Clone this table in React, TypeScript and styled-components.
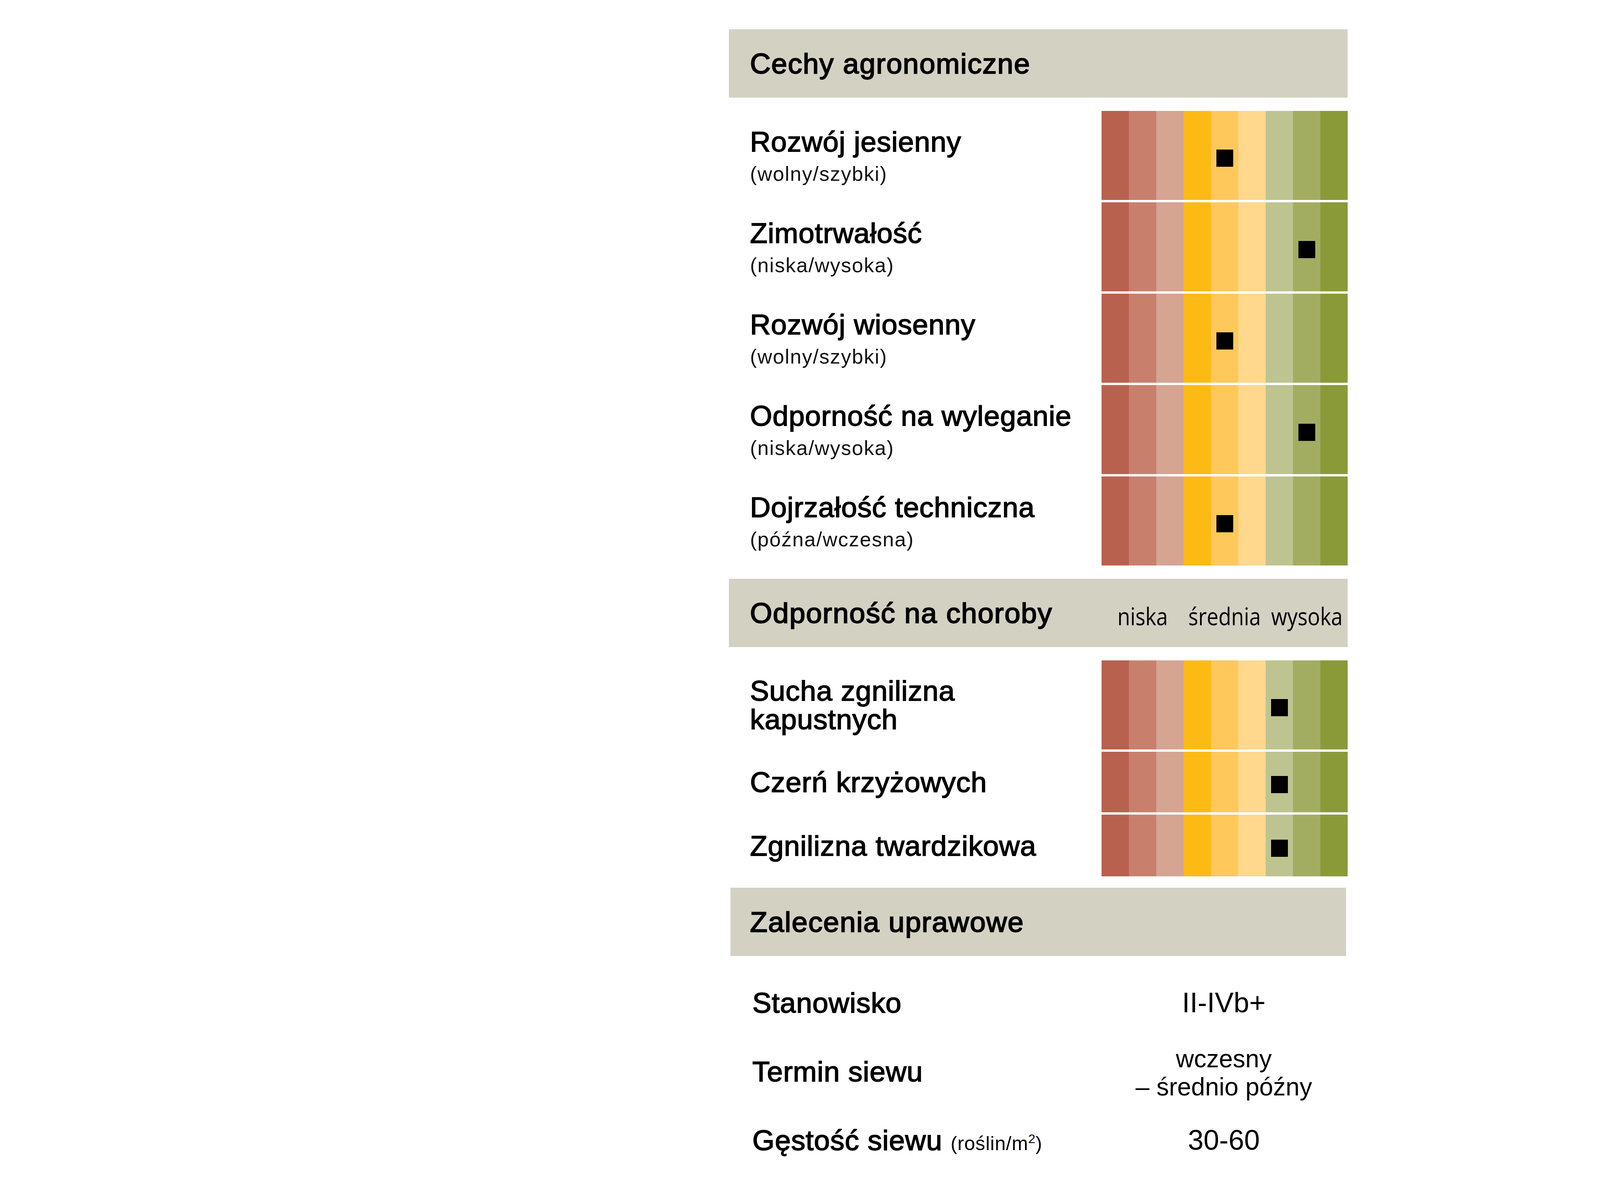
import styled, { createGlobalStyle } from "styled-components"

const GlobalStyle = createGlobalStyle`
    html, body {
        margin: 0;
        padding: 0;
        background: #ffffff;
    }
`

const SCALE = [
    "#B8614F",
    "#C8806C",
    "#D5A492",
    "#FCBA15",
    "#FEC85B",
    "#FFD88D",
    "#BEC490",
    "#A3AD62",
    "#8B9A39",
]

const Sheet = styled.div`
    display: flex;
    flex-direction: column;
    width: 1584px;
    margin-left: 1866px;
    padding-top: 75px;
    font-family: "Liberation Sans", Arial, sans-serif;
    color: #000;
`

const SectionHeader = styled.div<{ $inset?: boolean; $gap?: number }>`
    display: flex;
    align-items: center;
    justify-content: space-between;
    height: 175px;
    margin: ${p => p.$gap ?? 0}px ${p => (p.$inset ? 4 : 0)}px 0;
    padding-left: ${p => (p.$inset ? 50 : 54)}px;
    background: #D3D1C2;
`

const HeaderTitle = styled.h2`
    margin: 0;
    font-size: 73px;
    font-weight: 400;
    line-height: 1;
    letter-spacing: 1.8px;
    -webkit-text-stroke: 2.3px #000;
`

const ScaleLegend = styled.div`
    display: grid;
    grid-template-columns: repeat(3, 210px);
    align-self: stretch;
    align-items: center;
    padding-top: 14px;
`

const LegendWord = styled.span`
    justify-self: center;
    display: inline-block;
    font-family: "Open Sans", "Noto Sans", sans-serif;
    font-size: 62px;
    line-height: 1;
    transform: scaleX(0.86);
`

const RowList = styled.div<{ $gap: number }>`
    display: flex;
    flex-direction: column;
    gap: 6px;
    margin-top: ${p => p.$gap}px;
`

const ScaleRow = styled.div<{ $height: number }>`
    display: grid;
    grid-template-columns: 1fr 630px;
    height: ${p => p.$height}px;
`

const Label = styled.div`
    display: flex;
    flex-direction: column;
    justify-content: center;
    padding-left: 54px;
`

const LabelTitle = styled.div`
    font-size: 73px;
    line-height: 73px;
    letter-spacing: 0.9px;
    -webkit-text-stroke: 1.9px #000;
`

const LabelHint = styled.div`
    margin-top: 20px;
    font-size: 52px;
    line-height: 1;
    letter-spacing: 1.8px;
    color: #111;
`

const Bar = styled.div`
    display: grid;
    grid-template-columns: repeat(9, 70px);
`

const Cell = styled.div<{ $color: string }>`
    display: flex;
    align-items: center;
    justify-content: center;
    background: ${p => p.$color};
`

const Marker = styled.span`
    width: 43px;
    height: 44px;
    margin-top: 13px;
    background: #000;
`

const RecList = styled.div`
    display: flex;
    flex-direction: column;
    padding-top: 31px;
`

const RecRow = styled.div`
    display: grid;
    grid-template-columns: 1fr 630px;
    align-items: center;
    height: 176px;
`

const RecLabel = styled.div`
    padding-left: 60px;
    font-size: 73px;
    line-height: 1;
    letter-spacing: 0.9px;
    -webkit-text-stroke: 1.9px #000;
    white-space: nowrap;
`

const RecUnit = styled.span`
    font-size: 50px;
    letter-spacing: 0.8px;
    -webkit-text-stroke: 0;
    sup {
        font-size: 32px;
        line-height: 0;
    }
`

const RecValue = styled.div<{ $small?: boolean }>`
    text-align: center;
    font-size: ${p => (p.$small ? 64 : 72)}px;
    line-height: ${p => (p.$small ? "72px" : 1)};
    margin-top: ${p => (p.$small ? 8 : 0)}px;
    margin-right: 4px;
`

type Trait = {
    title: string[]
    hint?: string
    mark: number
    height: number
}

const agronomic: Trait[] = [
    { title: ["Rozwój jesienny"], hint: "(wolny/szybki)", mark: 4, height: 228 },
    { title: ["Zimotrwałość"], hint: "(niska/wysoka)", mark: 7, height: 228 },
    { title: ["Rozwój wiosenny"], hint: "(wolny/szybki)", mark: 4, height: 228 },
    { title: ["Odporność na wyleganie"], hint: "(niska/wysoka)", mark: 7, height: 228 },
    { title: ["Dojrzałość techniczna"], hint: "(późna/wczesna)", mark: 4, height: 228 },
]

const diseases: Trait[] = [
    { title: ["Sucha zgnilizna", "kapustnych"], mark: 6, height: 228 },
    { title: ["Czerń krzyżowych"], mark: 6, height: 155 },
    { title: ["Zgnilizna twardzikowa"], mark: 6, height: 158 },
]

function TraitRow({ trait }: { trait: Trait }) {
    return (
        <ScaleRow $height={trait.height}>
            <Label>
                <LabelTitle>
                    {trait.title.map((line, i) => (
                        <div key={i}>{line}</div>
                    ))}
                </LabelTitle>
                {trait.hint && <LabelHint>{trait.hint}</LabelHint>}
            </Label>
            <Bar>
                {SCALE.map((color, i) => (
                    <Cell key={color} $color={color}>
                        {i === trait.mark && <Marker />}
                    </Cell>
                ))}
            </Bar>
        </ScaleRow>
    )
}

export default function App() {
    return (
        <>
            <GlobalStyle />
            <Sheet>
                <SectionHeader>
                    <HeaderTitle>Cechy agronomiczne</HeaderTitle>
                </SectionHeader>
                <RowList $gap={34}>
                    {agronomic.map(t => (
                        <TraitRow key={t.title[0]} trait={t} />
                    ))}
                </RowList>

                <SectionHeader $gap={34}>
                    <HeaderTitle>Odporność na choroby</HeaderTitle>
                    <ScaleLegend>
                        <LegendWord>niska</LegendWord>
                        <LegendWord>średnia</LegendWord>
                        <LegendWord>wysoka</LegendWord>
                    </ScaleLegend>
                </SectionHeader>
                <RowList $gap={34}>
                    {diseases.map(t => (
                        <TraitRow key={t.title[0]} trait={t} />
                    ))}
                </RowList>

                <SectionHeader $gap={29} $inset>
                    <HeaderTitle>Zalecenia uprawowe</HeaderTitle>
                </SectionHeader>
                <RecList>
                    <RecRow>
                        <RecLabel>Stanowisko</RecLabel>
                        <RecValue>II-IVb+</RecValue>
                    </RecRow>
                    <RecRow>
                        <RecLabel>Termin siewu</RecLabel>
                        <RecValue $small>
                            wczesny
                            <br />– średnio późny
                        </RecValue>
                    </RecRow>
                    <RecRow>
                        <RecLabel>
                            Gęstość siewu{" "}
                            <RecUnit>
                                (roślin/m<sup>2</sup>)
                            </RecUnit>
                        </RecLabel>
                        <RecValue>30-60</RecValue>
                    </RecRow>
                </RecList>
            </Sheet>
        </>
    )
}
